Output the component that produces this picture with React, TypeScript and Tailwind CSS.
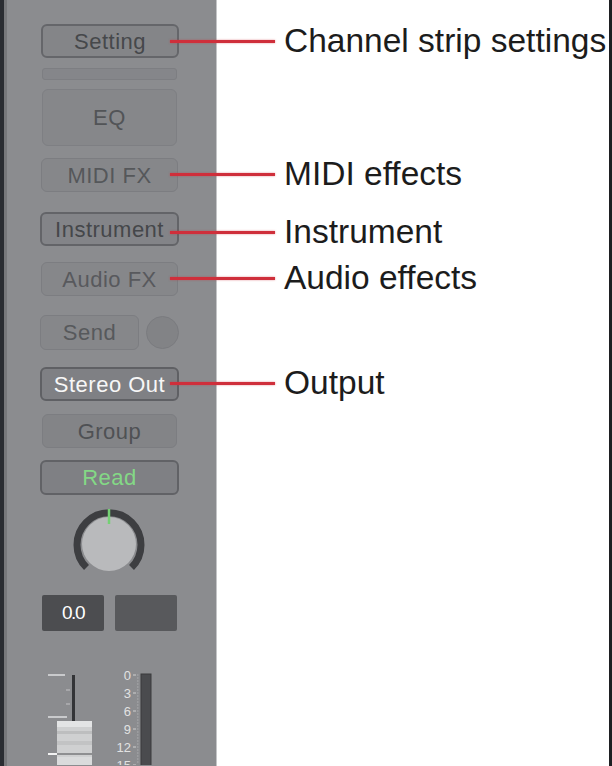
import React from "react";

const font = { fontFamily: '"Liberation Sans", Arial, sans-serif' };

const Btn = ({ label, cls, text }: { label: string; cls: string; text: string }) => (
  <div className={`flex items-center justify-center rounded-[6px] text-[22px] tracking-[0.5px] ${cls} ${text}`}>
    {label}
  </div>
);

const Callout = ({ label, cls }: { label: string; cls: string }) => (
  <div className={`flex items-center h-[34px] ${cls}`}>
    <div className="ml-[-47px] w-[105px] h-[3px] bg-[#cf2f3b] shadow-[0_0_2px_rgba(207,47,59,0.6)]" />
    <span className="ml-[9px] text-[33.5px] leading-none text-[#1c1c1c] whitespace-nowrap">{label}</span>
  </div>
);

const Knob = () => (
  <svg width="72" height="72" viewBox="0 0 72 72">
    <path d="M 13.5 59.5 A 32 32 0 1 1 58.5 59.5" fill="none" stroke="#3d3e41" strokeWidth="7" />
    <circle cx="36" cy="36" r="27" fill="#b9babc" />
    <line x1="36" y1="1" x2="36" y2="16" stroke="#74d174" strokeWidth="2.5" />
  </svg>
);

const FaderMeter = () => (
  <svg width="209" height="98" viewBox="0 0 209 98">
    {/* fader scale ticks */}
    <line x1="41" y1="8" x2="58" y2="8" stroke="#c9cacc" strokeWidth="2" />
    <line x1="59" y1="23" x2="63" y2="23" stroke="#b0b1b3" strokeWidth="1.5" />
    <line x1="59" y1="37" x2="63" y2="37" stroke="#b0b1b3" strokeWidth="1.5" />
    <line x1="41" y1="50" x2="60" y2="50" stroke="#c9cacc" strokeWidth="2" />
    <rect x="65" y="8" width="3" height="46" fill="#333437" />
    {/* fader cap */}
    <rect x="50" y="54" width="35" height="44" fill="#cfd0d1" />
    <rect x="50" y="54" width="35" height="6" fill="#e3e4e5" />
    <rect x="50" y="64" width="35" height="3" fill="#bdbebf" />
    <rect x="50" y="74" width="35" height="4" fill="#c2c3c4" />
    <rect x="50" y="86" width="35" height="2" fill="#8e8f91" />
    <rect x="50" y="90" width="35" height="8" fill="#dadbdc" />
    <line x1="41" y1="87" x2="50" y2="87" stroke="#f2f2f2" strokeWidth="2" />
    {/* meter */}
    <rect x="134" y="7" width="10" height="92" fill="#4a4b4e" stroke="#3a3b3d" strokeWidth="1" />
    {["0", "3", "6", "9", "12", "15"].map((n, i) => (
      <g key={n}>
        <text x="124" y={12.5 + i * 18} textAnchor="end" fontSize="13" fill="#e2e2e2" fontFamily="Liberation Sans, Arial, sans-serif">
          {n}
        </text>
        <line x1="126" y1={8 + i * 18} x2="129" y2={8 + i * 18} stroke="#cfcfcf" strokeWidth="1" />
      </g>
    ))}
    {Array.from({ length: 30 }).map((_, i) => (
      <line key={i} x1="130" y1={8 + i * 3} x2="131.5" y2={8 + i * 3} stroke="#b5b6b8" strokeWidth="0.8" />
    ))}
  </svg>
);

export default function App() {
  return (
    <div className="flex w-[612px] h-[766px] overflow-hidden bg-white" style={font}>
      <div className="w-[4px] bg-[#2a2d32]" />
      <div className="w-[3px] bg-[#77787b]" />
      <div className="w-[209px] bg-[#8b8c8f] flex flex-col pt-[24px]">
        <Btn label="Setting" cls="ml-[34px] w-[138px] h-[34px] bg-[#848588] border-2 border-[#65666a]" text="text-[#46484b]" />
        <div className="ml-[35px] mt-[10px] w-[135px] h-[12px] rounded-[3px] bg-[#85868a] border border-[#7d7e82]" />
        <Btn label="EQ" cls="ml-[35px] mt-[9px] w-[135px] h-[57px] bg-[#86878a] border border-[#7e7f83]" text="text-[#525457]" />
        <Btn label="MIDI FX" cls="ml-[34px] mt-[12px] w-[137px] h-[34px] bg-[#86878a] border border-[#7c7d81]" text="text-[#55575a]" />
        <Btn label="Instrument" cls="ml-[33px] mt-[20px] w-[139px] h-[34px] bg-[#838488] border-2 border-[#636468]" text="text-[#45474a]" />
        <Btn label="Audio FX" cls="ml-[34px] mt-[16px] w-[137px] h-[34px] bg-[#86878a] border border-[#7c7d81]" text="text-[#58595d]" />
        <div className="ml-[33px] mt-[19px] flex items-center gap-[7px] h-[35px]">
          <Btn label="Send" cls="w-[99px] h-[35px] bg-[#86878a] border border-[#7c7d81]" text="text-[#57595c]" />
          <div className="w-[33px] h-[33px] rounded-full bg-[#828386] border border-[#7a7b7f]" />
        </div>
        <Btn label="Stereo Out" cls="ml-[33px] mt-[17px] w-[139px] h-[34px] bg-[#7f8084] border-2 border-[#5f6064]" text="text-[#f7f7f7]" />
        <Btn label="Group" cls="ml-[35px] mt-[13px] w-[135px] h-[34px] bg-[#838487] border border-[#7c7d81]" text="text-[#4f5154]" />
        <Btn label="Read" cls="ml-[33px] mt-[12px] w-[139px] h-[35px] bg-[#7f8084] border-2 border-[#616266]" text="text-[#84d886]" />
        <div className="ml-[66px] mt-[13px] w-[72px] h-[72px]">
          <Knob />
        </div>
        <div className="ml-[35px] mt-[15px] flex gap-[11px]">
          <div className="w-[62px] h-[36px] rounded-[2px] bg-[#4c4d50] flex items-center justify-center text-[19px] tracking-[-1.5px] text-white">
            0.0
          </div>
          <div className="w-[62px] h-[36px] rounded-[2px] bg-[#58595c]" />
        </div>
        <div className="mt-[36px]">
          <FaderMeter />
        </div>
      </div>
      <div className="w-[1px] bg-[#c4c5c7]" />
      <div className="flex-1 bg-white flex flex-col pt-[24px]">
        <Callout label="Channel strip settings" cls="" />
        <Callout label="MIDI effects" cls="mt-[99px]" />
        <Callout label="Instrument" cls="mt-[24px]" />
        <Callout label="Audio effects" cls="mt-[12px]" />
        <Callout label="Output" cls="mt-[71px]" />
      </div>
      <div className="w-[3px] bg-[#1e1f22]" />
    </div>
  );
}
